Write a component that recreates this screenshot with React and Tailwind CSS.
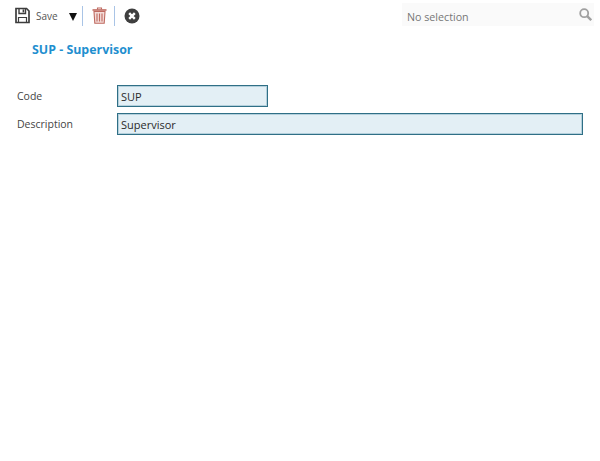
import React from "react";

const SaveIcon = () => (
  <svg width="15" height="17" viewBox="0 0 15 17" fill="none" stroke="#3d3d3d">
    <path d="M1 1.5h10.5l2.5 2.5v11.5h-13z" strokeWidth="1.7" fill="#fff" />
    <path d="M4 1.5v5h6.5v-5" strokeWidth="1.4" />
    <rect x="7.6" y="2.4" width="1.6" height="3" fill="#3d3d3d" stroke="none" />
    <path d="M3.5 15.5v-5h8v5" strokeWidth="1.2" />
  </svg>
);

const TrashIcon = () => (
  <svg width="15" height="17" viewBox="0 0 15 17" fill="none" stroke="#bf6a60" strokeWidth="1.1">
    <path d="M5.5 2.5V1h4v1.5" />
    <path d="M.5 3h14" strokeWidth="1.6" />
    <path d="M2 4.5l.8 11.8h9.4l.8-11.8z" fill="#f3dcd9" />
    <path d="M5 6.5v8M7.5 6.5v8M10 6.5v8" />
  </svg>
);

const CloseIcon = () => (
  <svg width="16" height="16" viewBox="0 0 16 16">
    <circle cx="8" cy="8" r="7.5" fill="#3f3f3f" />
    <path d="M5.2 5.2l5.6 5.6M10.8 5.2l-5.6 5.6" stroke="#fff" strokeWidth="2.4" />
  </svg>
);

const SearchIcon = () => (
  <svg width="13" height="13" viewBox="0 0 13 13" fill="none" stroke="#a0a0a0">
    <circle cx="5.2" cy="5.2" r="4" strokeWidth="1.8" />
    <path d="M8.2 8.2l4 4" strokeWidth="2.4" />
  </svg>
);

const Field = ({ label, value, inputClass }) => (
  <div className="flex items-center h-[22px]">
    <label className="w-[100px] mt-[2px] text-[10.5px] text-[#444]">{label}</label>
    <input
      readOnly
      value={value}
      className={`${inputClass} h-[22px] pl-[3px] bg-[#e3eff5] border border-[#2f6f86] shadow-[inset_0_0_0_1px_#b4d0dc] text-[11px] text-[#2a2a2a] outline-none`}
    />
  </div>
);

export default function App() {
  return (
    <div className="w-[600px] h-[461px] bg-white font-['Open_Sans',sans-serif] overflow-hidden">
      {/* Toolbar */}
      <div className="flex items-start h-[38px] pt-[3px] pl-[15px] pr-[6px]">
        <div className="flex items-center h-[23px] pt-[2px]">
          <SaveIcon />
          <span className="ml-[6px] mt-[1px] text-[10px] text-[#555]">Save</span>
          <span className="ml-[11px] mt-[3px] w-0 h-0 border-x-[4px] border-x-transparent border-t-[8px] border-t-[#111]" />
          <span className="ml-[5px] w-px h-[20px] bg-[#a9c4e6]" />
          <span className="ml-[9px] flex"><TrashIcon /></span>
          <span className="ml-[7px] w-px h-[20px] bg-[#a9c4e6]" />
          <span className="ml-[9px] flex"><CloseIcon /></span>
        </div>
        <div className="ml-auto flex items-center justify-between w-[192px] h-[23px] pl-[5px] pr-[2px] bg-[#fafafa]">
          <span className="mt-[5px] text-[10.7px] text-[#777]">No selection</span>
          <SearchIcon />
        </div>
      </div>

      {/* Title */}
      <h1 className="pl-[32px] text-[12.4px] leading-[24px] font-bold text-[#1f8fcf]">SUP - Supervisor</h1>

      {/* Form */}
      <div className="flex flex-col gap-[6px] mt-[23px] pl-[17px]">
        <Field label="Code" value="SUP" inputClass="w-[151px]" />
        <Field label="Description" value="Supervisor" inputClass="w-[466px]" />
      </div>
    </div>
  );
}
